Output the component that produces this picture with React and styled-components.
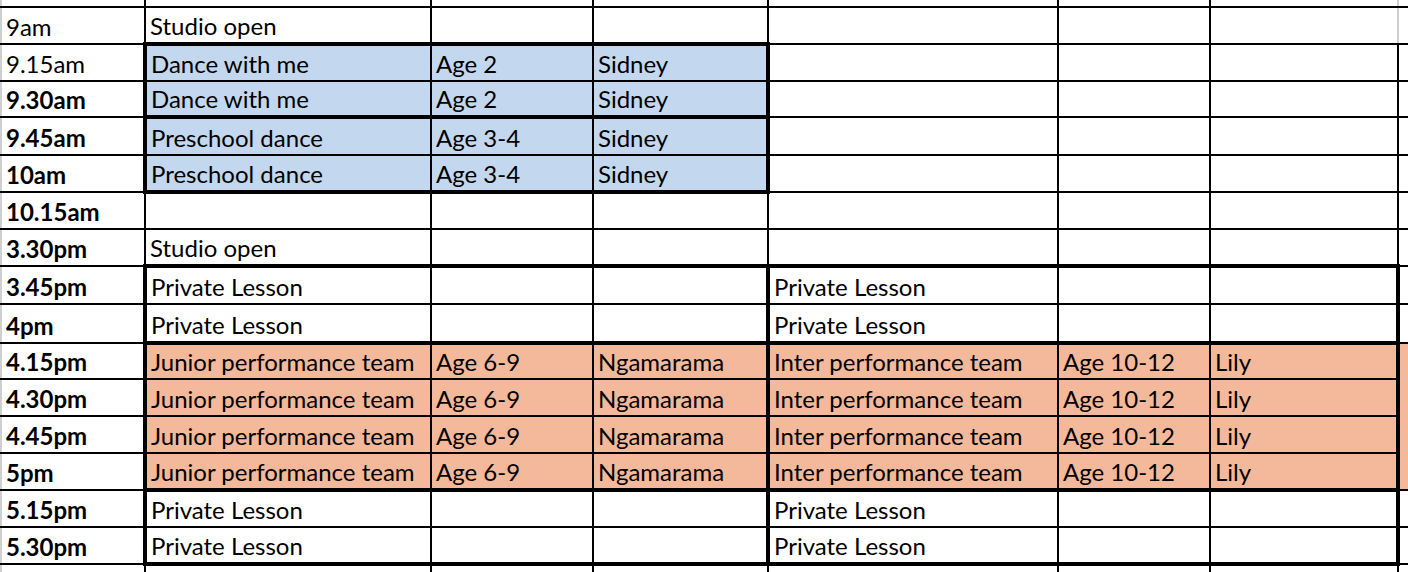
import React from 'react';
import styled, { createGlobalStyle } from 'styled-components';

const GlobalStyle = createGlobalStyle`
  html, body {
    margin: 0;
    padding: 0;
    background: #ffffff;
    overflow: hidden;
  }
  body {
    font-family: Lato, "Open Sans", sans-serif;
    color: #000000;
  }
`;

const Sheet = styled.table`
  border-collapse: collapse;
  table-layout: fixed;
  margin-top: -30px;
  width: 1468px;
`;

const Row = styled.tr`
  height: ${p => p.$h}px;
`;

const Cell = styled.td`
  padding: 0 2px 3px 4px;
  vertical-align: bottom;
  white-space: nowrap;
  overflow: hidden;
  font-size: 24px;
  line-height: 26px;
  font-weight: ${p => (p.$bold ? 700 : 400)};
  background: ${p => p.$fill || 'transparent'};
  border-top: ${p => p.$top};
  border-bottom: ${p => p.$bottom};
  border-left: ${p => p.$left};
  border-right: ${p => p.$right};
`;

const BLUE = '#c3d7ee';
const SALMON = '#f4b89a';

const THIN = '2px solid #000';
const THICK = '4px solid #000';
const GREY = '2px solid #cfcfcf';
const NONE = 'none';

const widths = [144, 286, 162, 175, 290, 152, 188, 71];

// row 0 is the cut-off row above 9am, the last one is cut off below
const rows = [
  { time: '8.45am', h: 37, cells: [] },
  { time: '9am', h: 37, cells: ['Studio open'] },
  { time: '9.15am', h: 37, cells: ['Dance with me', 'Age 2', 'Sidney'] },
  { time: '9.30am', bold: true, h: 36, cells: ['Dance with me', 'Age 2', 'Sidney'] },
  { time: '9.45am', bold: true, h: 38, cells: ['Preschool dance', 'Age 3-4', 'Sidney'] },
  { time: '10am', bold: true, h: 37, cells: ['Preschool dance', 'Age 3-4', 'Sidney'] },
  { time: '10.15am', bold: true, h: 37, cells: [] },
  { time: '3.30pm', bold: true, h: 37, cells: ['Studio open'] },
  { time: '3.45pm', bold: true, h: 38, cells: ['Private Lesson', '', '', 'Private Lesson'] },
  { time: '4pm', bold: true, h: 39, cells: ['Private Lesson', '', '', 'Private Lesson'] },
  { time: '4.15pm', bold: true, h: 36, cells: ['Junior performance team', 'Age 6-9', 'Ngamarama', 'Inter performance team', 'Age 10-12', 'Lily'] },
  { time: '4.30pm', bold: true, h: 37, cells: ['Junior performance team', 'Age 6-9', 'Ngamarama', 'Inter performance team', 'Age 10-12', 'Lily'] },
  { time: '4.45pm', bold: true, h: 37, cells: ['Junior performance team', 'Age 6-9', 'Ngamarama', 'Inter performance team', 'Age 10-12', 'Lily'] },
  { time: '5pm', bold: true, h: 37, cells: ['Junior performance team', 'Age 6-9', 'Ngamarama', 'Inter performance team', 'Age 10-12', 'Lily'] },
  { time: '5.15pm', bold: true, h: 37, cells: ['Private Lesson', '', '', 'Private Lesson'] },
  { time: '5.30pm', bold: true, h: 37, cells: ['Private Lesson', '', '', 'Private Lesson'] },
  { time: '', bold: true, h: 37, cells: [] },
];

// outlined blocks: [firstRow, lastRow, firstCol, lastCol]
const boxes = [
  [2, 3, 1, 3],
  [4, 5, 1, 3],
  [8, 9, 1, 3], [8, 9, 4, 6],
  [10, 13, 1, 3], [10, 13, 4, 6],
  [14, 15, 1, 3], [14, 15, 4, 6],
];

const fills = [
  { from: 2, to: 5, cols: [1, 3], color: BLUE },
  { from: 10, to: 13, cols: [1, 7], color: SALMON },
];

const inBox = (r, c, b) => r >= b[0] && r <= b[1] && c >= b[2] && c <= b[3];

function fillFor(r, c) {
  const f = fills.find(f => r >= f.from && r <= f.to && c >= f.cols[0] && c <= f.cols[1]);
  return f ? f.color : null;
}

function bordersFor(r, c) {
  const hit = boxes.filter(b => inBox(r, c, b));
  const thick = side => hit.some(b =>
    (side === 'top' && r === b[0]) ||
    (side === 'bottom' && r === b[1]) ||
    (side === 'left' && c === b[2]) ||
    (side === 'right' && c === b[3]));

  const b = {
    $top: thick('top') ? THICK : THIN,
    $bottom: thick('bottom') ? THICK : THIN,
    $left: thick('left') ? THICK : THIN,
    $right: thick('right') ? THICK : THIN,
  };

  if (c === 0) b.$left = GREY;
  if (c === 7) {
    b.$right = NONE;
    if (fillFor(r, c)) {
      b.$top = NONE;
      b.$bottom = NONE;
    }
  }
  // edge of the print area above the blocks
  if (r <= 1 && (c === 6 || c === 7)) {
    if (c === 6) b.$right = GREY;
    else b.$left = GREY;
  }
  if (r === 0) b.$top = NONE;
  return b;
}

export default function App() {
  return (
    <>
      <GlobalStyle />
      <Sheet>
        <colgroup>
          {widths.map((w, i) => <col key={i} style={{ width: w }} />)}
        </colgroup>
        <tbody>
          {rows.map((row, r) => (
            <Row key={r} $h={row.h}>
              <Cell $bold={row.bold} {...bordersFor(r, 0)}>{row.time}</Cell>
              {[1, 2, 3, 4, 5, 6, 7].map(c => (
                <Cell key={c} $fill={fillFor(r, c)} {...bordersFor(r, c)}>
                  {row.cells[c - 1] || ''}
                </Cell>
              ))}
            </Row>
          ))}
        </tbody>
      </Sheet>
    </>
  );
}
